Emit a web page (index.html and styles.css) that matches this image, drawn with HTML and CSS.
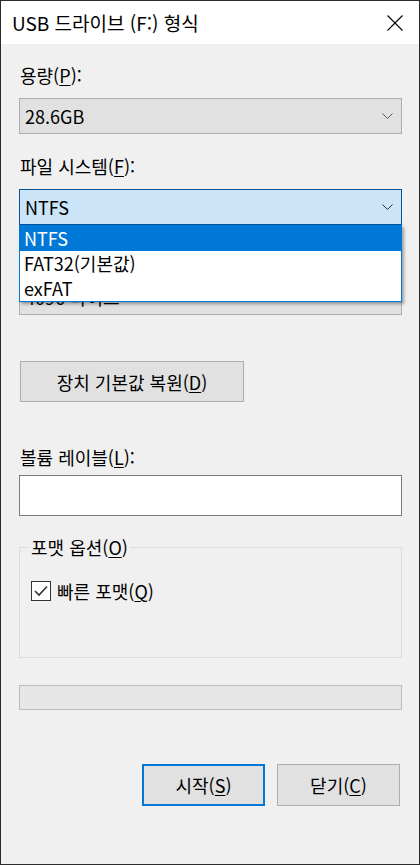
FILE: index.html
```html
<!DOCTYPE html>
<html lang="ko">
<head>
<meta charset="utf-8">
<title>USB 드라이브 (F:) 형식</title>
<link rel="stylesheet" href="styles.css">
</head>
<body>
<div class="window">
  <div class="titlebar">
    <span class="title">USB 드라이브 (F:) 형식</span>
    <svg class="close" width="16" height="16" viewBox="0 0 16 16"><path d="M0.5 0.5 L15.5 15.5 M15.5 0.5 L0.5 15.5" stroke="#000" stroke-width="1.1" fill="none"/></svg>
  </div>
  <div class="content">
    <div class="label l1">용량(<u>P</u>):</div>
    <div class="combo">
      <span class="val">28.6GB</span>
      <svg class="chev" width="11" height="6" viewBox="0 0 11 6"><path d="M0.5 0.5 L5.5 5.5 L10.5 0.5" stroke="#555" stroke-width="1" fill="none"/></svg>
    </div>

    <div class="label l2">파일 시스템(<u>F</u>):</div>
    <div class="fswrap">
      <div class="combo focused">
        <span class="val">NTFS</span>
        <svg class="chev" width="11" height="6" viewBox="0 0 11 6"><path d="M0.5 0.5 L5.5 5.5 L10.5 0.5" stroke="#333" stroke-width="1" fill="none"/></svg>
      </div>
      <ul class="droplist">
        <li class="sel">NTFS</li>
        <li>FAT32(기본값)</li>
        <li>exFAT</li>
      </ul>
    </div>

    <div class="label l3">할당 단위 크기(<u>A</u>):</div>
    <div class="combo">
      <span class="val">4096 바이트</span>
      <svg class="chev" width="11" height="6" viewBox="0 0 11 6"><path d="M0.5 0.5 L5.5 5.5 L10.5 0.5" stroke="#555" stroke-width="1" fill="none"/></svg>
    </div>

    <div class="restore-row">
      <button class="btn restore">장치 기본값 복원(<u>D</u>)</button>
    </div>

    <div class="label l4">볼륨 레이블(<u>L</u>):</div>
    <div class="textbox"></div>

    <fieldset class="group">
      <legend>포맷 옵션(<u>O</u>)</legend>
      <div class="check-row">
        <span class="checkbox">
          <svg width="18" height="18" viewBox="0 0 18 18"><path d="M3 9 L7 13 L15 4.5" stroke="#333" stroke-width="1.6" fill="none"/></svg>
        </span>
        <span class="check-label">빠른 포맷(<u>Q</u>)</span>
      </div>
    </fieldset>

    <div class="progress"></div>

    <div class="actions">
      <button class="btn primary">시작(<u>S</u>)</button>
      <button class="btn">닫기(<u>C</u>)</button>
    </div>
  </div>
</div>
</body>
</html>
```

FILE: styles.css
```css
* { box-sizing: border-box; }
html, body { margin: 0; padding: 0; }
body {
  width: 420px;
  height: 865px;
  background: #f0f0f0;
  font-family: "Noto Sans CJK KR", "Noto Sans", sans-serif;
  font-size: 18px;
  color: #000;
}
u { text-decoration-thickness: 1px; text-underline-offset: 2px; }

.window {
  width: 420px;
  height: 865px;
  border: 1px solid #2b2b2b;
  background: #f0f0f0;
  display: flex;
  flex-direction: column;
}

.titlebar {
  height: 43px;
  background: #fff;
  display: flex;
  align-items: center;
  justify-content: space-between;
  padding: 0 16px 0 11px;
  flex: none;
}
.title { font-size: 19px; line-height: 24px; }
.close { display: block; }

.content {
  padding: 19px 17px 0 18px;
  display: flex;
  flex-direction: column;
}

.label { line-height: 24px; height: 24px; padding-left: 1px; }
.l1 { margin-bottom: 11px; }
.l2 { margin-top: 20px; margin-bottom: 11px; }
.l3 { margin-top: 20px; margin-bottom: 10px; }
.l4 { margin-top: 43px; margin-bottom: 6px; }

.combo {
  height: 36px;
  background: #e1e1e1;
  border: 1px solid #adadad;
  display: flex;
  align-items: center;
  justify-content: space-between;
  padding: 0 8px 0 5px;
}
.combo .val { line-height: 24px; }
.combo.focused { background: #cce4f7; border-color: #005499; }
.chev { display: block; }

.fswrap { position: relative; z-index: 2; }
.droplist {
  position: absolute;
  left: 0;
  right: 0;
  top: 36px;
  margin: 0;
  padding: 0;
  list-style: none;
  background: #fff;
  border: 1px solid #0078d7;
  box-shadow: 2px 2px 3px rgba(0, 0, 0, 0.35);
}
.droplist li {
  height: 25px;
  line-height: 25px;
  padding-left: 4px;
}
.droplist li.sel { background: #0078d7; color: #fff; }

.restore-row { display: flex; margin-top: 46px; }
.btn {
  font-family: inherit;
  font-size: 18px;
  color: #000;
  background: #e1e1e1;
  border: 1px solid #adadad;
  padding: 0;
  margin: 0;
  line-height: 24px;
}
.restore { width: 224px; height: 41px; margin-left: 1px; }

.textbox {
  height: 41px;
  background: #fff;
  border: 1px solid #7a7a7a;
}

.group {
  margin: 19px 0 0 0;
  padding: 20px 0 0 11px;
  height: 123px;
  border: 1px solid #dcdcdc;
  min-width: 0;
}
.group legend {
  padding: 0 2px;
  margin-left: -2px;
  line-height: 24px;
}
.check-row { display: flex; align-items: center; gap: 6px; }
.checkbox {
  width: 20px;
  height: 20px;
  border: 1px solid #333;
  background: #fff;
  display: flex;
  align-items: center;
  justify-content: center;
}
.checkbox svg { display: block; }
.check-label { line-height: 24px; }

.progress {
  margin-top: 27px;
  height: 25px;
  background: #e6e6e6;
  border: 1px solid #bcbcbc;
}

.actions {
  display: flex;
  justify-content: flex-end;
  gap: 12px;
  margin-top: 54px;
  padding-right: 2px;
}
.actions .btn { width: 123px; height: 42px; }
.actions .btn.primary { border: 2px solid #0078d7; }
```
